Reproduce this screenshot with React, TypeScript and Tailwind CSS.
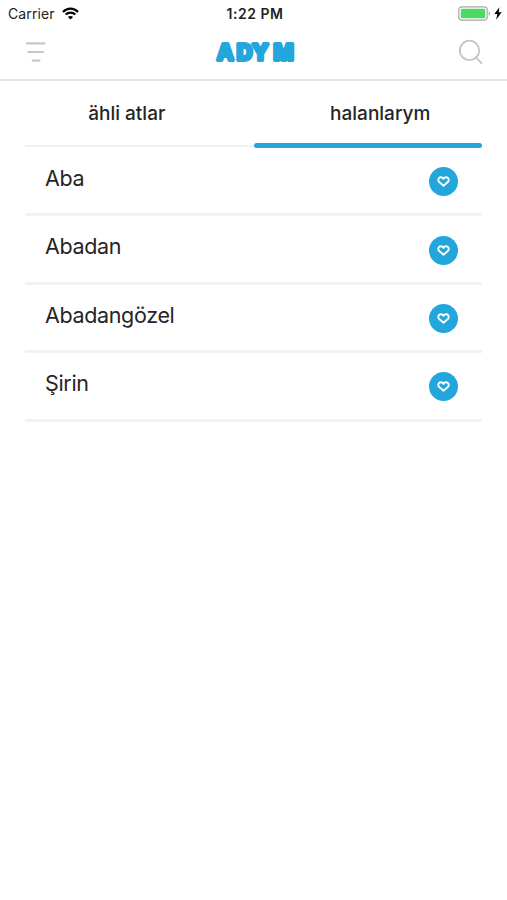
import { useState } from "react";

const TABS = ["ähli atlar", "halanlarym"];

const NAMES = ["Aba", "Abadan", "Abadangözel", "Şirin"];

function StatusBar() {
  return (
    <div className="flex h-[27px] items-center justify-between pl-2 pr-[5px] text-[#222]">
      <div className="flex w-[120px] items-center gap-[7px]">
        <span className="text-[14px] leading-none tracking-[0.1px]">Carrier</span>
        <svg width="17" height="13" viewBox="0 0 17 13" fill="none" stroke="#000">
          <path d="M1 4.9C5.2 .6 11.8 .6 16 4.9" strokeWidth="2.2" />
          <path d="M3.7 7.6C6.4 5 10.6 5 13.3 7.6" strokeWidth="2.1" />
          <path d="M8.5 12.6L5.9 10C7.3 8.7 9.7 8.7 11.1 10Z" fill="#000" stroke="none" />
        </svg>
      </div>
      <span className="pt-px text-[14px] font-semibold leading-none tracking-[0.5px]">1:22 PM</span>
      <div className="flex w-[120px] items-center justify-end gap-[3px]">
        <svg width="33" height="15" viewBox="0 0 33 15">
          <rect x=".8" y=".8" width="28.4" height="13.4" rx="3.2" fill="#fff" stroke="#a5a5a5" strokeWidth="1.2" />
          <rect x="2.8" y="2.8" width="24.4" height="9.4" rx="1.2" fill="#4cd964" />
          <path d="M30.7 5.2C32.4 5.8 32.4 9.2 30.7 9.8Z" fill="#a5a5a5" />
        </svg>
        <svg width="8" height="13" viewBox="0 0 8 13">
          <path d="M5.4 .3L.3 7.1H3.3L2.2 12.7L7.7 5.3H4.7Z" fill="#000" />
        </svg>
      </div>
    </div>
  );
}

function Logo() {
  // the heavy stroke closes the counters so the letters read as solid blocks
  return (
    <svg
      width="80"
      height="28"
      viewBox="0 0 80 28"
      className="overflow-visible font-['Inter',sans-serif] text-[21.5px] font-bold"
      fill="#22a6dc"
      stroke="#22a6dc"
      strokeWidth="4"
      strokeLinejoin="round"
    >
      <text x="3.2 22.8 38.6 59.6" y="22">ADYM</text>
    </svg>
  );
}

function Header() {
  return (
    <header className="flex h-[54px] items-center justify-between border-b-2 border-[#e4e4e4] pb-[3px] pl-[25px] pr-6">
      <button type="button" aria-label="Menu" className="w-6">
        <svg width="22" height="22" viewBox="0 0 22 22" stroke="#c8c8c8" strokeWidth="2.2" strokeLinecap="round">
          <path d="M2 2.4H19.5M3.2 11H18M7.7 19.6H14.4" />
        </svg>
      </button>
      <Logo />
      <button type="button" aria-label="Search" className="w-6">
        <svg width="24" height="26" viewBox="0 0 24 26" fill="none" stroke="#c4c4c4" strokeWidth="1.8" strokeLinecap="round">
          <circle cx="10.5" cy="11.4" r="9.7" />
          <path d="M17 18.5L22.5 24.2" />
        </svg>
      </button>
    </header>
  );
}

function HeartButton() {
  return (
    <button
      type="button"
      aria-label="Favourite"
      className="flex h-[29px] w-[29px] items-center justify-center rounded-full bg-[#22a6dc]"
    >
      <svg width="13" height="11" viewBox="0 0 13 11" fill="none" stroke="#fff" strokeWidth="1.9" strokeLinejoin="round">
        <path d="M6.5 9.8L2.2 6C.2 3.8 1.8 1.3 3.8 1.3C5.1 1.3 6 2 6.5 2.9C7 2 7.9 1.3 9.2 1.3C11.2 1.3 12.8 3.8 10.8 6Z" />
      </svg>
    </button>
  );
}

export default function App() {
  const [active, setActive] = useState(1);

  return (
    <div className="min-h-screen bg-white font-['Inter','Liberation_Sans',sans-serif] text-[#252525]">
      <StatusBar />
      <Header />

      <nav className="relative flex h-[66px]">
        {TABS.map((tab, i) => (
          <button
            key={tab}
            type="button"
            onClick={() => setActive(i)}
            className="flex-1 text-[19px] font-medium"
          >
            {tab}
          </button>
        ))}
        <div className="absolute inset-x-[25px] bottom-0 h-[2px] bg-[#f0f0f0]" />
        <div
          className={`absolute -bottom-px h-[5px] w-[228px] rounded-full bg-[#22a6dc] ${
            active === 1 ? "right-[25px]" : "left-[25px]"
          }`}
        />
      </nav>

      <ul className="mx-[25px] pt-px">
        {NAMES.map((name) => (
          <li
            key={name}
            className="flex h-[68.4px] items-center justify-between border-b-[3px] border-[#f2f2f2] pl-5 pr-6"
          >
            <span className="pb-[4px] text-[21.5px] leading-none tracking-[-0.35px]">{name}</span>
            <div className="pt-[2px]">
              <HeartButton />
            </div>
          </li>
        ))}
      </ul>
    </div>
  );
}
